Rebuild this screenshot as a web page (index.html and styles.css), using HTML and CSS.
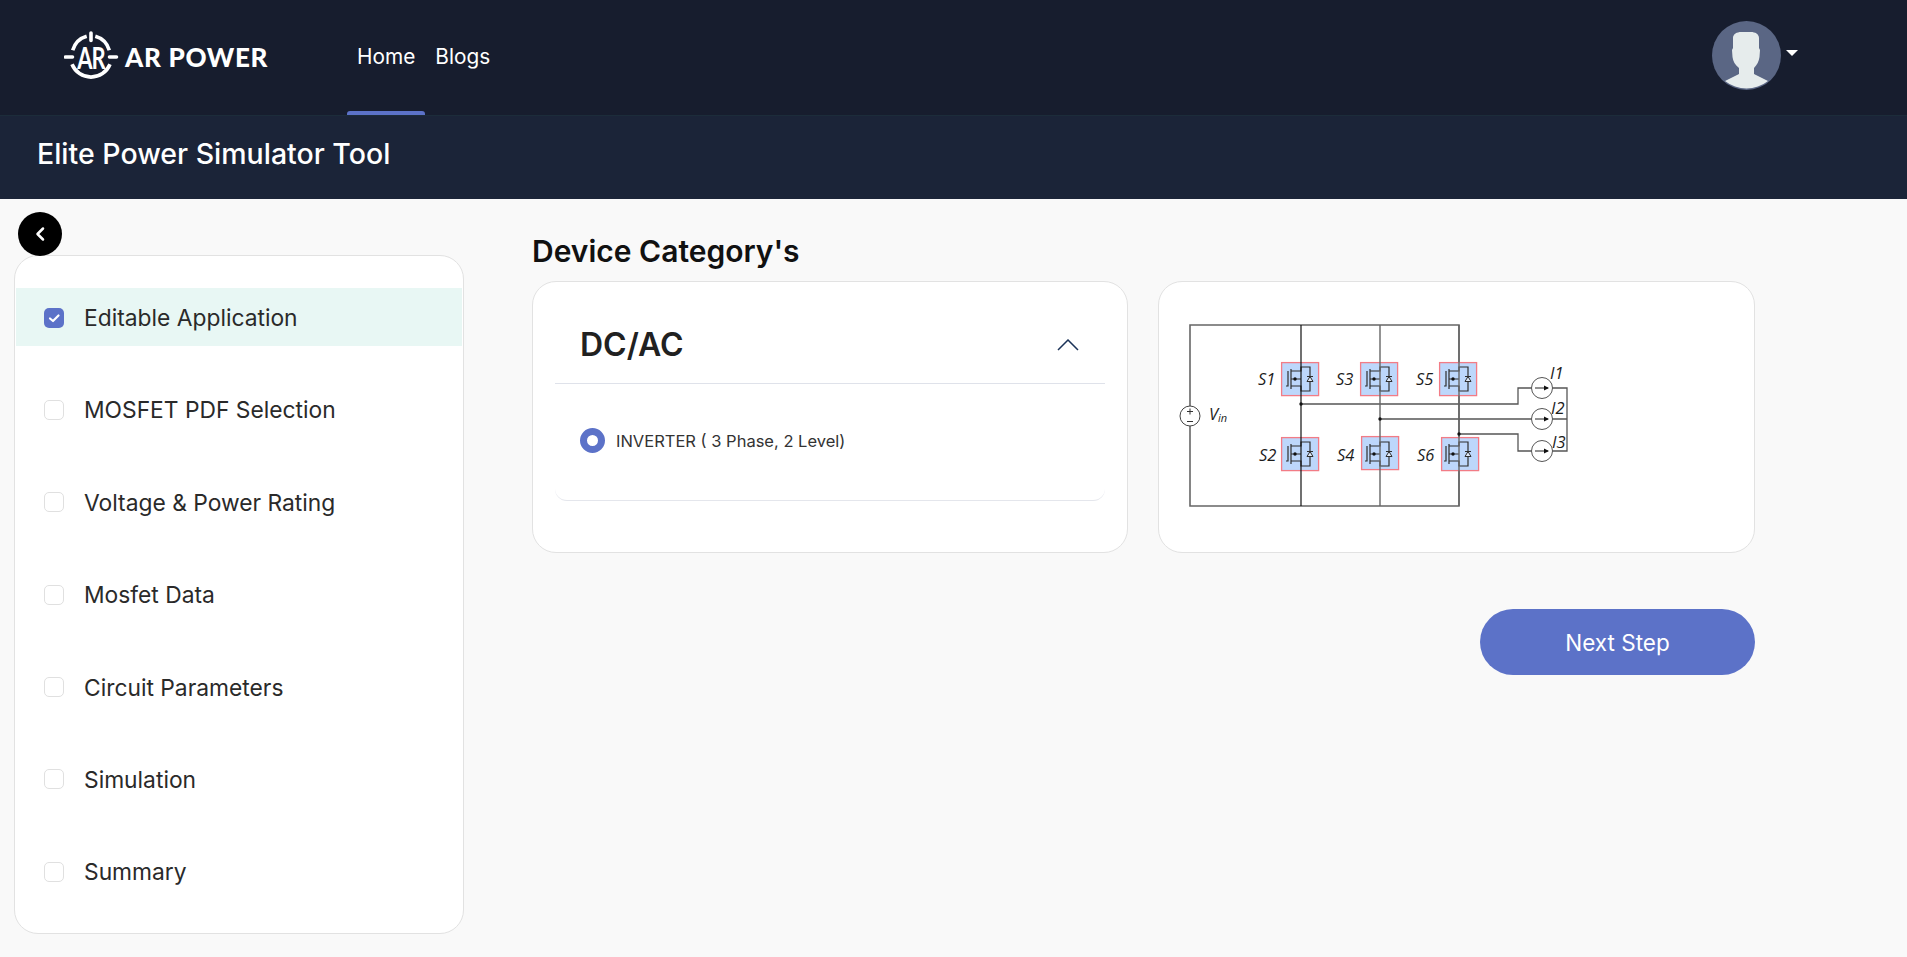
FILE: index.html
```html
<!DOCTYPE html>
<html lang="en">
<head>
<meta charset="utf-8">
<title>Elite Power Simulator Tool</title>
<link rel="stylesheet" href="styles.css">
</head>
<body>
<svg class="defs" width="0" height="0" aria-hidden="true">
  <defs>
    <rect id="box" x="0.6" y="0.6" width="37" height="33" fill="#bdd7fb" stroke="#f27c86" stroke-width="1.300"/>
    <g id="fet">
      <path d="M5 24H7V9M10 7V27M10 9H20V5H29V29H20V24H10M10 17H20" fill="none" stroke="#2e2e2e" stroke-width="1.200"/>
      <circle cx="14" cy="17" r="1.700" fill="#111"/>
      <path d="M26 19.500L29 14.500L32 19.500ZM26 14.500H32" fill="#dfe9f8" stroke="#2e2e2e" stroke-width="1"/>
    </g>
    <g id="src">
      <circle cx="0" cy="0" r="10.500" fill="#fff" stroke="#555" stroke-width="1"/>
      <path d="M-7 0H6" stroke="#222" stroke-width="1"/>
      <path d="M7 0L2 -2.500V2.500Z" fill="#111"/>
    </g>
  </defs>
</svg>

<header class="topbar">
  <div class="brand">
    <svg class="brand-mark" viewBox="0 0 55 51" aria-hidden="true">
      <path d="M8.700 19.300A20.500 20.500 0 0 1 22.700 5.300M31.300 5.300A20.500 20.500 0 0 1 45.300 19.300M8 33.300A20.500 20.500 0 0 0 46 33.300" fill="none" stroke="#fff" stroke-width="3.600"/>
      <path d="M27 2V9.500M1.500 26H8.500M45.500 26H52.500" stroke="#fff" stroke-width="3.600" stroke-linecap="round"/>
      <text class="brand-mark-text" transform="translate(27 38) scale(1 1.400)" text-anchor="middle">AR</text>
    </svg>
    <span class="brand-name">AR POWER</span>
  </div>
  <nav class="nav">
    <a class="nav-link is-active">Home</a>
    <a class="nav-link">Blogs</a>
  </nav>
  <div class="user">
    <svg class="avatar" viewBox="0 0 69 69" aria-hidden="true">
      <circle cx="34.500" cy="34.500" r="34.500" fill="#5a6684"/>
      <path d="M13 60L27 53V47C23 44 21 40 20.500 36L20 29L21 27V17C21 13 25 11 29 11H39C43 11 47 13 47 17V27L48 29L47.500 36C47 40 45 44 42 47V53L56 60A34.500 34.500 0 0 1 13 60Z" fill="#e6ecec"/>
    </svg>
    <span class="caret"></span>
  </div>
</header>

<div class="titlebar"><h1 class="title">Elite Power Simulator Tool</h1></div>

<main class="layout">
  <aside class="sidebar">
    <button class="back" type="button" aria-label="Back">
      <svg viewBox="0 0 12 16" width="12" height="16" aria-hidden="true"><path d="M9 2.500L3.500 8L9 13.500" fill="none" stroke="#fff" stroke-width="2.500" stroke-linecap="round" stroke-linejoin="round"/></svg>
    </button>
    <ul class="steps">
      <li class="step is-current">
        <span class="check is-on"><svg viewBox="0 0 20 20" width="20" height="20" aria-hidden="true"><path d="M6 10.500L9 13L14.500 7.500" fill="none" stroke="#fff" stroke-width="2.200" stroke-linecap="round" stroke-linejoin="round"/></svg></span>
        <span class="step-label">Editable Application</span>
      </li>
      <li class="step"><span class="check"></span><span class="step-label">MOSFET PDF Selection</span></li>
      <li class="step"><span class="check"></span><span class="step-label">Voltage &amp; Power Rating</span></li>
      <li class="step"><span class="check"></span><span class="step-label">Mosfet Data</span></li>
      <li class="step"><span class="check"></span><span class="step-label">Circuit Parameters</span></li>
      <li class="step"><span class="check"></span><span class="step-label">Simulation</span></li>
      <li class="step"><span class="check"></span><span class="step-label">Summary</span></li>
    </ul>
  </aside>

  <section class="content">
    <h2 class="heading">Device Category's</h2>
    <div class="cards">
      <article class="card">
        <div class="acc">
          <div class="acc-head">
            <span class="acc-title">DC/AC</span>
            <svg class="chev" viewBox="0 0 22 12" aria-hidden="true"><path d="M1 11L11 1L21 11" fill="none" stroke="#1b3358" stroke-width="1.500"/></svg>
          </div>
          <div class="acc-body">
            <span class="radio"></span>
            <span class="radio-label">INVERTER ( 3 Phase, 2 Level)</span>
          </div>
        </div>
      </article>
      <article class="card">
        <svg class="circuit" viewBox="1159 282 595 270" aria-label="Three phase inverter circuit">
          <path d="M1190 406V325H1459V506H1190V426" fill="none" stroke="#666" stroke-width="1.600"/>
          <use href="#box" x="1281" y="362"/>
          <use href="#box" x="1360" y="362"/>
          <use href="#box" x="1439" y="362"/>
          <use href="#box" x="1281" y="437"/>
          <use href="#box" x="1361" y="436"/>
          <use href="#box" x="1441" y="437"/>
          <use href="#fet" x="1281" y="362"/>
          <use href="#fet" x="1360" y="362"/>
          <use href="#fet" x="1439" y="362"/>
          <use href="#fet" x="1281" y="437"/>
          <use href="#fet" x="1360" y="437"/>
          <use href="#fet" x="1439" y="437"/>
          <g fill="none" stroke="#555" stroke-width="1.300">
            <path d="M1301 404H1518V388H1532M1552 388H1567V451H1552"/>
            <path d="M1380 419H1532M1552 419H1567"/>
            <path d="M1459 434H1518V451H1532"/>
          </g>
          <path d="M1301 325V506" stroke="#111" stroke-width="1.200"/>
          <path d="M1380 325V506M1459 325V506" stroke="#666" stroke-width="1.400"/>
          <g fill="#111">
            <circle cx="1301" cy="404" r="1.700"/>
            <circle cx="1380" cy="419" r="1.700"/>
            <circle cx="1459" cy="434" r="1.700"/>
          </g>
          <use href="#src" x="1542" y="388"/>
          <use href="#src" x="1542" y="419"/>
          <use href="#src" x="1542" y="451"/>
          <circle cx="1190" cy="416" r="10" fill="#fff" stroke="#444" stroke-width="1"/>
          <path d="M1187 411.500H1193M1190 408.500V414.500M1187 421.500H1193" stroke="#333" stroke-width="1"/>
          <g class="circuit-label">
            <text x="1258" y="385">S1</text>
            <text x="1336" y="385">S3</text>
            <text x="1416" y="385">S5</text>
            <text x="1259" y="461">S2</text>
            <text x="1337" y="461">S4</text>
            <text x="1417" y="461">S6</text>
            <text x="1209" y="420">V<tspan class="sub" dy="2">in</tspan></text>
            <text x="1550" y="379">I1</text>
            <text x="1551" y="414">I2</text>
            <text x="1552" y="448">I3</text>
          </g>
        </svg>
      </article>
    </div>
    <div class="actions"><button class="next" type="button">Next Step</button></div>
  </section>
</main>
</body>
</html>
```

FILE: styles.css
```css
* { box-sizing: border-box; }
html, body { margin: 0; height: 100%; }
body {
  background: #f9f9f9;
  color: #2a2a2a;
  font-family: "Inter", "Open Sans", sans-serif;
  overflow: hidden;
}
.defs { position: absolute; }

.topbar {
  height: 116px;
  background: #171d2e;
  border-bottom: 1px solid #1c2c3a;
  display: flex;
  align-items: stretch;
  padding-left: 64px;
}
.brand {
  display: flex;
  align-items: center;
  gap: 6px;
  width: 283px;
  padding-bottom: 2px;
}
.brand-mark { width: 55px; height: 51px; }
.brand-mark-text {
  font-family: "Lato", sans-serif;
  font-weight: 700;
  font-size: 22px;
  fill: #fff;
  letter-spacing: -1px;
}
.brand-name {
  font-family: "Lato", sans-serif;
  font-weight: 900;
  font-size: 26px;
  letter-spacing: 0.7px;
  color: #fff;
}
.nav { display: flex; }
.nav-link {
  display: flex;
  align-items: center;
  height: 115px;
  padding: 0 10px 2px;
  color: #fff;
  font-size: 20.800px;
  font-weight: 400;
  position: relative;
}
.is-active::after {
  content: "";
  position: absolute;
  left: 0;
  right: 0;
  bottom: 0;
  height: 4px;
  background: #5c72c8;
  border-radius: 3px 3px 0 0;
}
.user {
  margin-left: auto;
  display: flex;
  align-items: flex-start;
  gap: 5px;
  padding: 21px 109px 0 0;
}
.avatar { width: 69px; height: 69px; display: block; }
.caret {
  margin-top: 29px;
  width: 0;
  height: 0;
  border-left: 6px solid transparent;
  border-right: 6px solid transparent;
  border-top: 6px solid #fff;
}

.titlebar {
  height: 83px;
  background: #1b2438;
  display: flex;
  align-items: center;
  padding: 0 0 8px 37px;
}
.title {
  margin: 0;
  color: #fff;
  font-size: 28.500px;
  font-weight: 500;
}

.layout {
  display: flex;
  align-items: flex-start;
  padding-left: 14px;
}
.sidebar {
  position: relative;
  width: 450px;
  height: 679px;
  margin-top: 56px;
  background: #fff;
  border: 1px solid #e2e2e2;
  border-radius: 24px;
  padding: 32px 1px 0;
}
.back {
  position: absolute;
  left: 3px;
  top: -44px;
  width: 44px;
  height: 44px;
  border: 0;
  border-radius: 50%;
  background: #000;
  display: flex;
  align-items: center;
  justify-content: center;
  padding: 0;
}
.steps {
  list-style: none;
  margin: 0;
  padding: 0;
  display: flex;
  flex-direction: column;
  gap: 34.400px;
}
.step {
  height: 58px;
  display: flex;
  align-items: center;
  gap: 20px;
  padding-left: 28px;
  font-size: 22.800px;
  color: #2a2a2a;
}
.step-label { padding-top: 1px; }
.is-current { background: #e8f7f4; }
.check {
  width: 20px;
  height: 20px;
  flex: none;
  border: 1px solid #e0e0e0;
  border-radius: 5px;
  background: #fff;
  display: block;
  margin-top: 1px;
}
.check.is-on { border: 0; background: #5c72c8; }
.check svg { display: block; }

.content {
  width: 1223px;
  margin-left: 68px;
}
.heading {
  margin: 27px 0 0;
  height: 55px;
  font-size: 30px;
  font-weight: 600;
  line-height: 51px;
  color: #111;
}
.cards {
  display: grid;
  grid-template-columns: 596px 597px;
  gap: 30px;
}
.card {
  height: 272px;
  background: #fff;
  border: 1px solid #e2e2e2;
  border-radius: 24px;
  overflow: hidden;
}
.acc {
  margin: 0 22px;
  height: 219px;
  border-bottom: 1px solid #e4e6ec;
  border-radius: 0 0 12px 12px;
}
.acc-head {
  height: 102px;
  border-bottom: 1px solid #dfe2ea;
  display: flex;
  align-items: center;
  justify-content: space-between;
  padding: 24px 26px 0 25px;
}
.acc-title { font-size: 32px; font-weight: 600; color: #212121; }
.chev { width: 22px; height: 12px; }
.acc-body {
  display: flex;
  align-items: center;
  gap: 11px;
  padding: 44px 0 0 25px;
}
.radio {
  width: 25px;
  height: 25px;
  border-radius: 50%;
  border: 7.500px solid #5c72c8;
  background: #fff;
  flex: none;
}
.radio-label { font-size: 16.500px; color: #333; }
.circuit { display: block; width: 100%; height: 100%; }
.circuit-label text {
  font-family: "Open Sans", sans-serif;
  font-style: italic;
  font-size: 16.500px;
  fill: #1d1d1d;
}
.circuit-label .sub { font-size: 11px; }

.actions {
  display: flex;
  justify-content: flex-end;
  margin-top: 56px;
}
.next {
  width: 275px;
  height: 66px;
  border: 0;
  border-radius: 33px;
  background: #5c72c8;
  color: #fff;
  font-family: inherit;
  font-size: 22.500px;
  font-weight: 400;
  padding-top: 2px;
}
```
